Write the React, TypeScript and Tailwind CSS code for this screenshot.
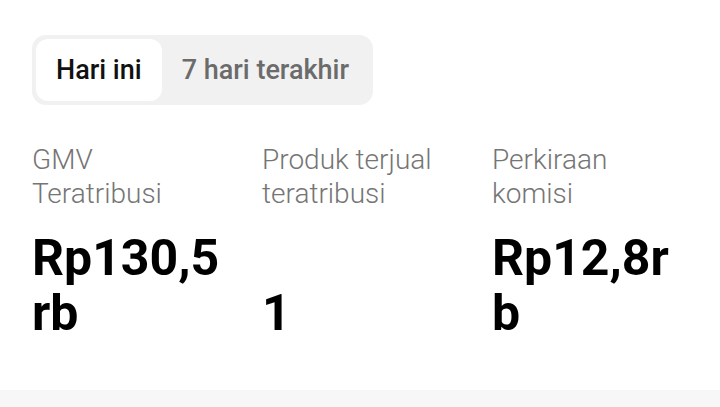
import { useState } from 'react';

const stats = [
  { label: 'GMV Teratribusi', value: 'Rp130,5rb' },
  { label: 'Produk terjual teratribusi', value: '1' },
  { label: 'Perkiraan komisi', value: 'Rp12,8rb' },
];

export default function App() {
  const [range, setRange] = useState<'today' | 'week'>('today');

  return (
    <div className="w-[720px] h-[407px] bg-white flex flex-col font-['Roboto',sans-serif] overflow-hidden">
      <div className="flex-1 px-8 pt-[35px]">
        <div className="inline-flex p-1 rounded-[14px] bg-[#f1f1f1]">
          <button
            onClick={() => setRange('today')}
            className={`h-[62px] px-5 rounded-xl text-[27px] font-medium ${
              range === 'today' ? 'bg-white text-[#111]' : 'text-[#6b6b6b]'
            }`}
          >
            Hari ini
          </button>
          <button
            onClick={() => setRange('week')}
            className={`h-[62px] px-5 rounded-xl text-[27px] font-medium ${
              range === 'week' ? 'bg-white text-[#111]' : 'text-[#6b6b6b]'
            }`}
          >
            7 hari terakhir
          </button>
        </div>

        <div className="mt-[38px] grid grid-cols-[190px_190px_190px] gap-x-10">
          {stats.map((s) => (
            <div key={s.label} className="flex flex-col">
              <div className="text-[28px] leading-[34px] font-light text-[#757575]">{s.label}</div>
              <div className="mt-auto pt-5 text-[50px] leading-[55px] font-bold text-black break-all">
                {s.value}
              </div>
            </div>
          ))}
        </div>
      </div>
      <div className="h-[17px] bg-[#f7f7f7]" />
    </div>
  );
}
